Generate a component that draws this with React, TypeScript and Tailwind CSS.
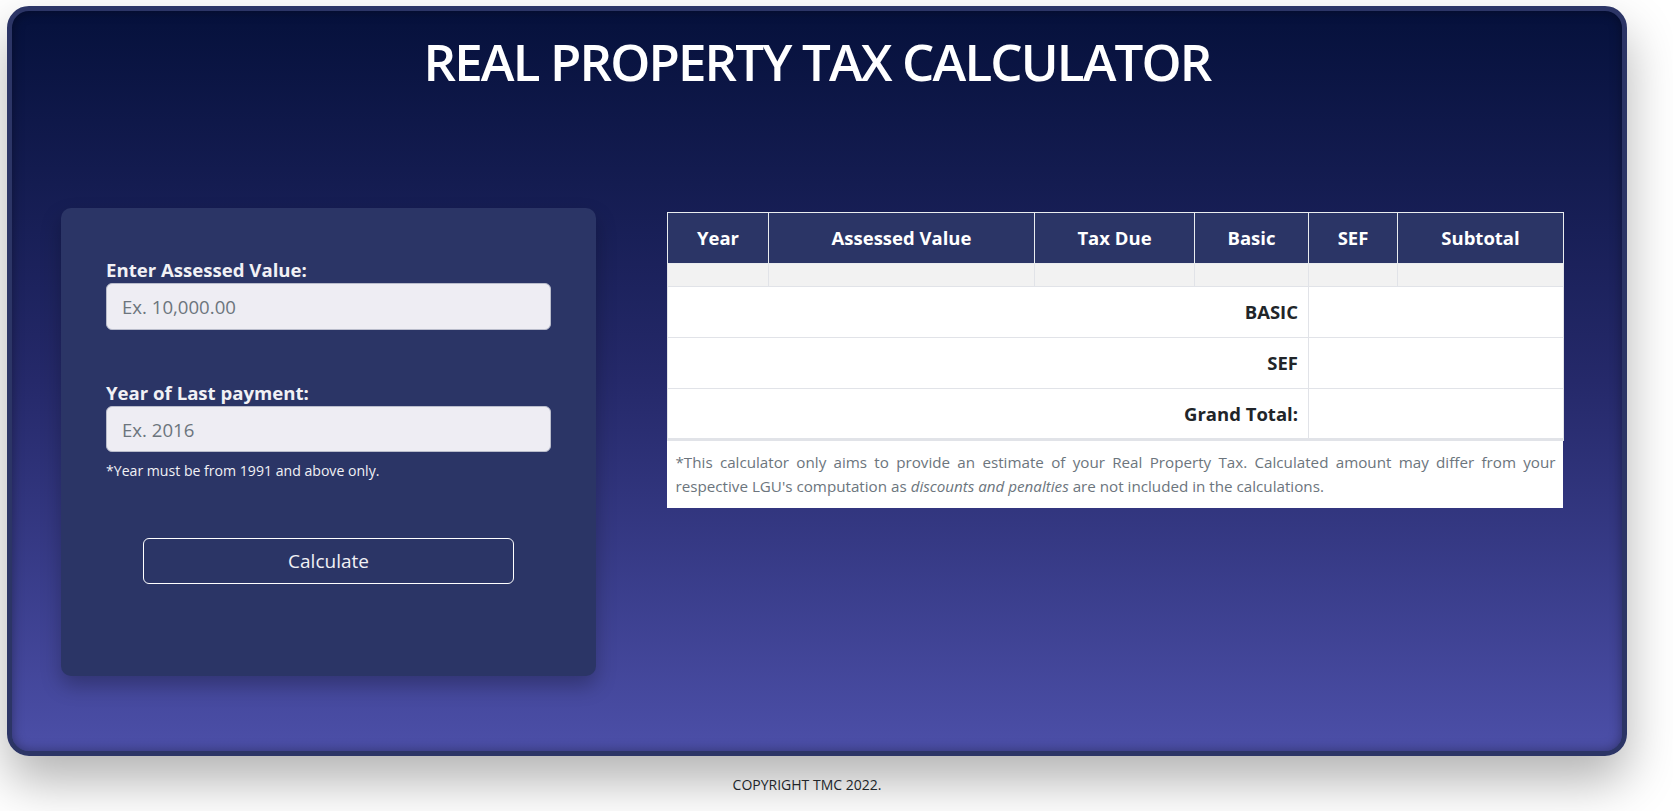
import React from 'react';

const font = { fontFamily: '"Open Sans", "Noto Sans", sans-serif' };

const headers = [
  { label: 'Year', w: 'w-[101px]' },
  { label: 'Assessed Value', w: 'w-[266px]' },
  { label: 'Tax Due', w: 'w-[160px]' },
  { label: 'Basic', w: 'w-[114px]' },
  { label: 'SEF', w: 'w-[89px]' },
  { label: 'Subtotal', w: 'w-[166px]' },
];

const totals = ['BASIC', 'SEF', 'Grand Total:'];

const App: React.FC = () => {
  return (
    <div className="min-h-[811px] w-full bg-white" style={font}>
      <div className="pt-[6px] pl-[7px]">
        <div className="w-[1620px] h-[750px] rounded-[22px] border-[5px] border-[#2c3566] bg-gradient-to-b from-[#06113c] via-[#25296a] to-[#4c4fa8] shadow-[0_25px_50px_rgba(0,0,0,0.3),inset_0_0_12px_rgba(0,0,0,0.35)]">
          <h1 className="pt-[25px] text-center text-[51px] leading-none font-semibold tracking-[-1.85px] text-white">
            REAL PROPERTY TAX CALCULATOR
          </h1>

          <div className="mt-[121px] flex items-start pl-[49px] gap-[71px]">
            {/* input panel */}
            <div className="w-[535px] h-[468px] rounded-[10px] bg-[#2b3566] px-[45px] pt-[50px] shadow-[0_10px_20px_rgba(0,0,0,0.25)]">
              <label className="block text-[18.6px] leading-[24px] font-bold text-[#f1f1f5]">Enter Assessed Value:</label>
              <input
                className="mt-[1px] block w-[445px] h-[47px] rounded-[6px] border border-[#b9bccb] bg-[#eeedf3] pl-[15px] text-[18.6px] text-[#212529] placeholder:text-[#6c757d] outline-none"
                placeholder="Ex. 10,000.00"
              />
              <label className="mt-[51px] block text-[18.6px] leading-[24px] font-bold text-[#f1f1f5]">Year of Last payment:</label>
              <input
                className="mt-[1px] block w-[445px] h-[46px] rounded-[6px] border border-[#b9bccb] bg-[#eeedf3] pl-[15px] text-[18.6px] text-[#212529] placeholder:text-[#6c757d] outline-none"
                placeholder="Ex. 2016"
              />
              <p className="mt-[9px] text-[14.1px] leading-[20px] text-[#f1f1f5]">*Year must be from 1991 and above only.</p>
              <div className="mt-[57px] flex justify-center">
                <button className="w-[371px] h-[46px] rounded-[6px] border border-white text-[19px] text-[#f1f1f5]">
                  Calculate
                </button>
              </div>
            </div>

            {/* results table */}
            <div className="mt-[4px] w-[896px] bg-white">
              <table className="w-full border-collapse table-fixed">
                <thead>
                  <tr className="h-[51px] bg-[#2b3566]">
                    {headers.map((h) => (
                      <th key={h.label} className={`${h.w} border border-[#e9ecef] text-[18.5px] font-bold text-white`}>
                        {h.label}
                      </th>
                    ))}
                  </tr>
                </thead>
                <tbody>
                  <tr className="h-[23px] bg-[#f2f2f2]">
                    {headers.map((h) => (
                      <td key={h.label} className="border border-[#e1e3e8]" />
                    ))}
                  </tr>
                  {totals.map((t) => (
                    <tr key={t} className="h-[51px]">
                      <td colSpan={4} className="border border-[#e1e3e8] pr-[10px] text-right text-[18.5px] font-bold text-[#212529]">
                        {t}
                      </td>
                      <td colSpan={2} className="border border-[#e1e3e8]" />
                    </tr>
                  ))}
                  <tr>
                    <td colSpan={6} className="border-t-[3px] border-[#e1e3e8] px-[8px] pt-[9px] pb-[10px] text-justify text-[15.2px] leading-[24px] text-[#6c757d]">
                      *This calculator only aims to provide an estimate of your Real Property Tax. Calculated amount may differ from your respective LGU's computation as <em>discounts and penalties</em> are not included in the calculations.
                    </td>
                  </tr>
                </tbody>
              </table>
            </div>
          </div>
        </div>
      </div>
      <footer className="pt-[18px] w-[1614px] text-center text-[14px] text-[#212529]">
        COPYRIGHT TMC 2022.
      </footer>
    </div>
  );
};

export default App;
